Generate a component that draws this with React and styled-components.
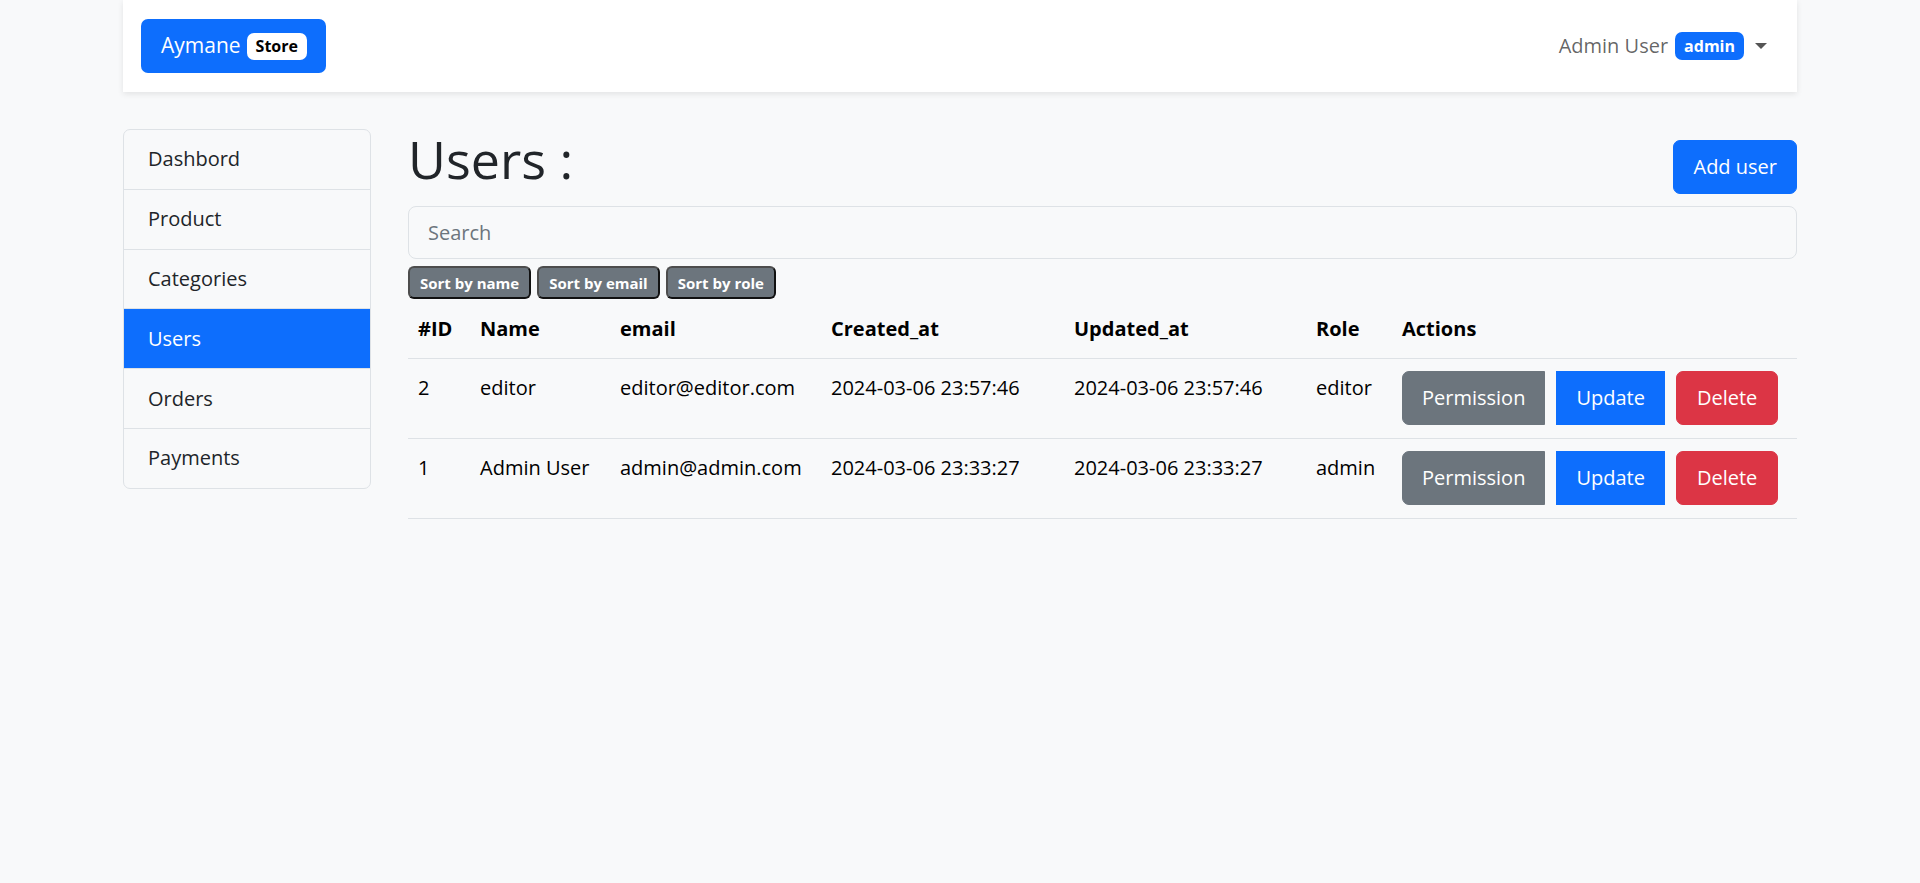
import React from 'react';
import styled, { createGlobalStyle } from 'styled-components';

const GlobalStyle = createGlobalStyle`
    body {
        margin: 0;
        background-color: #f8f9fa;
        font-family: "Open Sans", "Liberation Sans", sans-serif;
        font-size: 20px;
        line-height: 1.6;
        color: #212529;
    }
    * {
        box-sizing: border-box;
    }
`

const Page = styled.div`
    width: 1674px;
    margin: 0 auto;
`

const NavBar = styled.nav`
    height: 92px;
    background-color: #fff;
    box-shadow: 0 2px 6px rgba(0, 0, 0, 0.09);
    display: flex;
    align-items: center;
    justify-content: space-between;
    padding: 0 30px 0 18px;
`

const Brand = styled.a`
    display: flex;
    align-items: center;
    gap: 6px;
    height: 54px;
    padding: 0 19px 0 20px;
    background-color: #0d6efd;
    border-radius: 7px;
    color: #fff;
    font-size: 21px;
    text-decoration: none;
`

const Badge = styled.span`
    display: inline-flex;
    align-items: center;
    height: ${p => p.$h || 27}px;
    padding: 0 9px;
    border-radius: 7px;
    font-size: 16px;
    font-weight: 700;
    line-height: 1;
    background-color: ${p => p.$bg || '#fff'};
    color: ${p => p.$color || '#000'};
`

const UserMenu = styled.div`
    display: flex;
    align-items: center;
    color: rgba(0, 0, 0, 0.62);
    font-size: 20px;
    gap: 7px;
`

const Caret = styled.span`
    margin-left: 4px;
    width: 0;
    height: 0;
    border-top: 6px solid #555;
    border-left: 6px solid transparent;
    border-right: 6px solid transparent;
`

const Body = styled.div`
    display: flex;
    align-items: flex-start;
    gap: 37px;
    margin-top: 37px;
`

const SideList = styled.ul`
    width: 248px;
    flex-shrink: 0;
    margin: 0;
    padding: 0;
    list-style: none;
    border: 1px solid #dee2e6;
    border-radius: 7px;
    overflow: hidden;
`

const SideItem = styled.li`
    padding: 13.4px 24px;
    border-top: ${p => (p.$first ? 'none' : '1px solid #dee2e6')};
    background-color: ${p => (p.$active ? '#0d6efd' : 'transparent')};
    color: ${p => (p.$active ? '#fff' : '#212529')};
    cursor: pointer;
`

const Main = styled.main`
    flex: 1;
`

const TitleRow = styled.div`
    display: flex;
    justify-content: space-between;
    align-items: flex-start;
`

const Title = styled.h1`
    margin: 0;
    font-size: 52px;
    font-weight: 400;
    line-height: 60px;
`

const Button = styled.button`
    font-family: inherit;
    font-size: 20px;
    line-height: 32px;
    padding: 10px ${p => p.$px || 19}px;
    border: 1px solid ${p => p.$bg};
    background-color: ${p => p.$bg};
    color: #fff;
    border-radius: ${p => p.$radius || '7px'};
    cursor: pointer;
`

const AddButton = styled(Button)`
    margin-top: 11px;
`

const Search = styled.input`
    display: block;
    width: 100%;
    height: 53px;
    margin-top: 12px;
    padding: 0 19px;
    font-family: inherit;
    font-size: 20px;
    background-color: transparent;
    border: 1px solid #dee2e6;
    border-radius: 8px;
    color: #212529;
    &::placeholder {
        color: #6c757d;
    }
`

const SortBar = styled.div`
    display: flex;
    gap: 6px;
    margin-top: 7px;
`

const SortButton = styled.button`
    height: 33px;
    padding: 0 10px;
    font-family: inherit;
    font-size: 15px;
    font-weight: 700;
    color: #fff;
    background-color: #6c757d;
    border: 2px solid;
    border-color: #4d4d4d #111 #111 #4d4d4d;
    border-radius: 6px;
    cursor: pointer;
`

const Table = styled.table`
    width: 100%;
    border-collapse: collapse;
    table-layout: fixed;
    margin-top: 1px;
`

const Th = styled.th`
    text-align: left;
    font-weight: 700;
    color: #000;
    padding: 13px 10px;
    border-bottom: 1px solid #dee2e6;
    width: ${p => p.$w}px;
`

const Td = styled.td`
    vertical-align: top;
    padding: 13px 10px;
    color: #000;
    border-bottom: 1px solid #dee2e6;
    white-space: nowrap;
`

const Actions = styled.div`
    display: flex;
    gap: 11px;
    margin-top: -1px;
`

const columns = [
    { label: '#ID', w: 62 },
    { label: 'Name', w: 140 },
    { label: 'email', w: 211 },
    { label: 'Created_at', w: 243 },
    { label: 'Updated_at', w: 242 },
    { label: 'Role', w: 86 },
    { label: 'Actions' },
];

const users = [
    { id: 2, name: 'editor', email: 'editor@editor.com', created: '2024-03-06 23:57:46', updated: '2024-03-06 23:57:46', role: 'editor' },
    { id: 1, name: 'Admin User', email: 'admin@admin.com', created: '2024-03-06 23:33:27', updated: '2024-03-06 23:33:27', role: 'admin' },
];

const menu = ['Dashbord', 'Product', 'Categories', 'Users', 'Orders', 'Payments'];

const App = () => {
    return (
        <Page>
            <GlobalStyle />
            <NavBar>
                <Brand href="#">
                    Aymane <Badge>Store</Badge>
                </Brand>
                <UserMenu>
                    Admin User
                    <Badge $bg="#0d6efd" $color="#fff" $h={28}>admin</Badge>
                    <Caret />
                </UserMenu>
            </NavBar>
            <Body>
                <SideList>
                    {menu.map((item, i) => (
                        <SideItem key={item} $first={i === 0} $active={item === 'Users'}>
                            {item}
                        </SideItem>
                    ))}
                </SideList>
                <Main>
                    <TitleRow>
                        <Title>Users :</Title>
                        <AddButton $bg="#0d6efd">Add user</AddButton>
                    </TitleRow>
                    <Search placeholder="Search" />
                    <SortBar>
                        <SortButton>Sort by name</SortButton>
                        <SortButton>Sort by email</SortButton>
                        <SortButton>Sort by role</SortButton>
                    </SortBar>
                    <Table>
                        <thead>
                            <tr>
                                {columns.map(c => (
                                    <Th key={c.label} $w={c.w}>{c.label}</Th>
                                ))}
                            </tr>
                        </thead>
                        <tbody>
                            {users.map(u => (
                                <tr key={u.id}>
                                    <Td>{u.id}</Td>
                                    <Td>{u.name}</Td>
                                    <Td>{u.email}</Td>
                                    <Td>{u.created}</Td>
                                    <Td>{u.updated}</Td>
                                    <Td>{u.role}</Td>
                                    <Td>
                                        <Actions>
                                            <Button $bg="#6c757d" $radius="7px 0 0 7px">Permission</Button>
                                            <Button $bg="#0d6efd" $radius="0">Update</Button>
                                            <Button $bg="#dc3545" $px={20}>Delete</Button>
                                        </Actions>
                                    </Td>
                                </tr>
                            ))}
                        </tbody>
                    </Table>
                </Main>
            </Body>
        </Page>
    );
}

export default App
